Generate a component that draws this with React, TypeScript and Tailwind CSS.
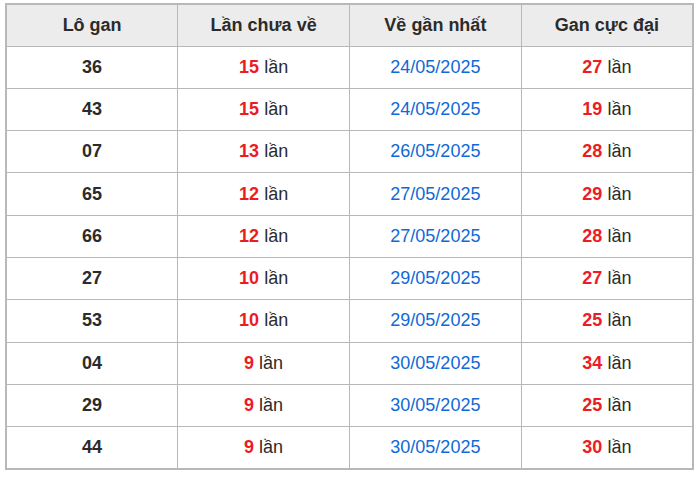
const ROWS = [
  { lo: "36", miss: 15, last: "24/05/2025", max: 27 },
  { lo: "43", miss: 15, last: "24/05/2025", max: 19 },
  { lo: "07", miss: 13, last: "26/05/2025", max: 28 },
  { lo: "65", miss: 12, last: "27/05/2025", max: 29 },
  { lo: "66", miss: 12, last: "27/05/2025", max: 28 },
  { lo: "27", miss: 10, last: "29/05/2025", max: 27 },
  { lo: "53", miss: 10, last: "29/05/2025", max: 25 },
  { lo: "04", miss: 9, last: "30/05/2025", max: 34 },
  { lo: "29", miss: 9, last: "30/05/2025", max: 25 },
  { lo: "44", miss: 9, last: "30/05/2025", max: 30 },
];

const HEADERS = ["Lô gan", "Lần chưa về", "Về gần nhất", "Gan cực đại"];

export default function App() {
  return (
    <div className="bg-white pl-[5px] pr-[6px] pt-[3px] font-['Liberation_Sans',Arial,sans-serif] text-[18px] text-[#2b2b2b]">
      <table className="w-full table-fixed border-collapse border-2 border-[#b8b8b8] text-center">
        <thead>
          <tr className="h-[42px] bg-[#ececec]">
            {HEADERS.map((h) => (
              <th key={h} className="border border-[#b8b8b8] font-bold">{h}</th>
            ))}
          </tr>
        </thead>
        <tbody>
          {ROWS.map((r) => (
            <tr key={r.lo} className="h-[42.3px]">
              <td className="border border-[#b8b8b8] font-bold">{r.lo}</td>
              <td className="border border-[#b8b8b8]">
                <span className="font-bold text-[#ec1c24]">{r.miss}</span> lần
              </td>
              <td className="border border-[#b8b8b8] text-[#0f69d6]">{r.last}</td>
              <td className="border border-[#b8b8b8]">
                <span className="font-bold text-[#ec1c24]">{r.max}</span> lần
              </td>
            </tr>
          ))}
        </tbody>
      </table>
    </div>
  );
}
